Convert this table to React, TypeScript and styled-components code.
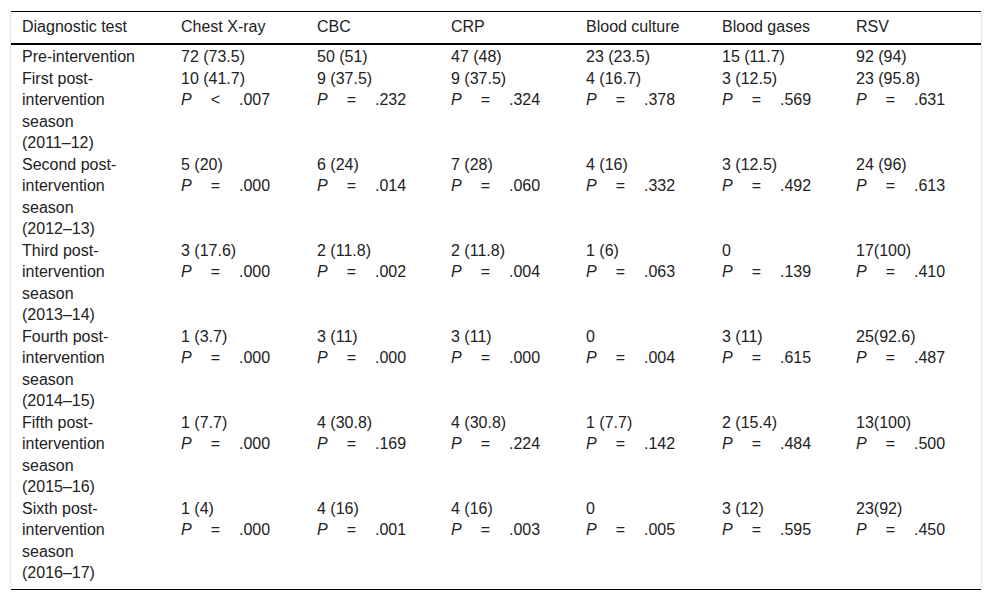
import * as React from 'react';
import styled, { createGlobalStyle } from 'styled-components';

const GlobalStyle = createGlobalStyle`
  body {
    margin: 0;
    background: #fff;
    font-family: "Liberation Sans", Arial, sans-serif;
    color: #222;
  }
`;

const Frame = styled.div`
  margin: 11px 10px 0;
  border-left: 1px solid #e8e8e8;
  border-right: 1px solid #e8e8e8;
`;

const Table = styled.table`
  width: 100%;
  table-layout: fixed;
  border-collapse: separate;
  border-spacing: 0;
  border-top: 1px solid #000;
  border-bottom: 1px solid #000;
  font-size: 16px;
  line-height: 21.5px;
`;

const Th = styled.th`
  text-align: left;
  font-weight: normal;
  padding: 4px 11px 5.5px;
  border-bottom: 2px solid #000;
  white-space: nowrap;
`;

const Row = styled.tr<{ $first?: boolean; $last?: boolean }>`
  & > td {
    padding-top: ${(p) => (p.$first ? '1.25px' : '0')};
    padding-bottom: ${(p) => (p.$last ? '5.25px' : '0')};
  }
`;

const Td = styled.td<{ $label?: boolean }>`
  vertical-align: top;
  padding-left: 11px;
  padding-right: ${(p) => (p.$label ? '28px' : '6px')};
`;

const Line = styled.div`
  white-space: nowrap;
`;

const Years = styled.span`
  white-space: nowrap;
`;

const Pv = styled.i`
  font-style: italic;
`;

const Op = styled.span`
  padding: 0 19px;
`;

type Cell = { n: string; op?: string; p?: string };

type RowData = { label: string; years?: string; cells: Cell[] };

const colWidths = [159, 136, 134, 135, 136, 134, 136];

const headers = [
  'Diagnostic test',
  'Chest X-ray',
  'CBC',
  'CRP',
  'Blood culture',
  'Blood gases',
  'RSV',
];

const rows: RowData[] = [
  {
    label: 'Pre-intervention',
    cells: [
      { n: '72 (73.5)' },
      { n: '50 (51)' },
      { n: '47 (48)' },
      { n: '23 (23.5)' },
      { n: '15 (11.7)' },
      { n: '92 (94)' },
    ],
  },
  {
    label: 'First post-intervention season',
    years: '(2011–12)',
    cells: [
      { n: '10 (41.7)', op: '<', p: '.007' },
      { n: '9 (37.5)', p: '.232' },
      { n: '9 (37.5)', p: '.324' },
      { n: '4 (16.7)', p: '.378' },
      { n: '3 (12.5)', p: '.569' },
      { n: '23 (95.8)', p: '.631' },
    ],
  },
  {
    label: 'Second post-intervention season',
    years: '(2012–13)',
    cells: [
      { n: '5 (20)', p: '.000' },
      { n: '6 (24)', p: '.014' },
      { n: '7 (28)', p: '.060' },
      { n: '4 (16)', p: '.332' },
      { n: '3 (12.5)', p: '.492' },
      { n: '24 (96)', p: '.613' },
    ],
  },
  {
    label: 'Third post-intervention season',
    years: '(2013–14)',
    cells: [
      { n: '3 (17.6)', p: '.000' },
      { n: '2 (11.8)', p: '.002' },
      { n: '2 (11.8)', p: '.004' },
      { n: '1 (6)', p: '.063' },
      { n: '0', p: '.139' },
      { n: '17(100)', p: '.410' },
    ],
  },
  {
    label: 'Fourth post-intervention season',
    years: '(2014–15)',
    cells: [
      { n: '1 (3.7)', p: '.000' },
      { n: '3 (11)', p: '.000' },
      { n: '3 (11)', p: '.000' },
      { n: '0', p: '.004' },
      { n: '3 (11)', p: '.615' },
      { n: '25(92.6)', p: '.487' },
    ],
  },
  {
    label: 'Fifth post-intervention season',
    years: '(2015–16)',
    cells: [
      { n: '1 (7.7)', p: '.000' },
      { n: '4 (30.8)', p: '.169' },
      { n: '4 (30.8)', p: '.224' },
      { n: '1 (7.7)', p: '.142' },
      { n: '2 (15.4)', p: '.484' },
      { n: '13(100)', p: '.500' },
    ],
  },
  {
    label: 'Sixth post-intervention season',
    years: '(2016–17)',
    cells: [
      { n: '1 (4)', p: '.000' },
      { n: '4 (16)', p: '.001' },
      { n: '4 (16)', p: '.003' },
      { n: '0', p: '.005' },
      { n: '3 (12)', p: '.595' },
      { n: '23(92)', p: '.450' },
    ],
  },
];

export default function App() {
  return (
    <>
      <GlobalStyle />
      <Frame>
        <Table>
          <colgroup>
            {colWidths.map((w, i) => (
              <col key={i} style={{ width: w }} />
            ))}
          </colgroup>
          <thead>
            <tr>
              {headers.map((h) => (
                <Th key={h}>{h}</Th>
              ))}
            </tr>
          </thead>
          <tbody>
            {rows.map((r, ri) => (
              <Row key={r.label} $first={ri === 0} $last={ri === rows.length - 1}>
                <Td $label>
                  {r.label}
                  {r.years && <> <Years>{r.years}</Years></>}
                </Td>
                {r.cells.map((c, ci) => (
                  <Td key={ci}>
                    <Line>{c.n}</Line>
                    {c.p && (
                      <Line>
                        <Pv>P</Pv>
                        <Op>{c.op ?? '='}</Op>
                        {c.p}
                      </Line>
                    )}
                  </Td>
                ))}
              </Row>
            ))}
          </tbody>
        </Table>
      </Frame>
    </>
  );
}
